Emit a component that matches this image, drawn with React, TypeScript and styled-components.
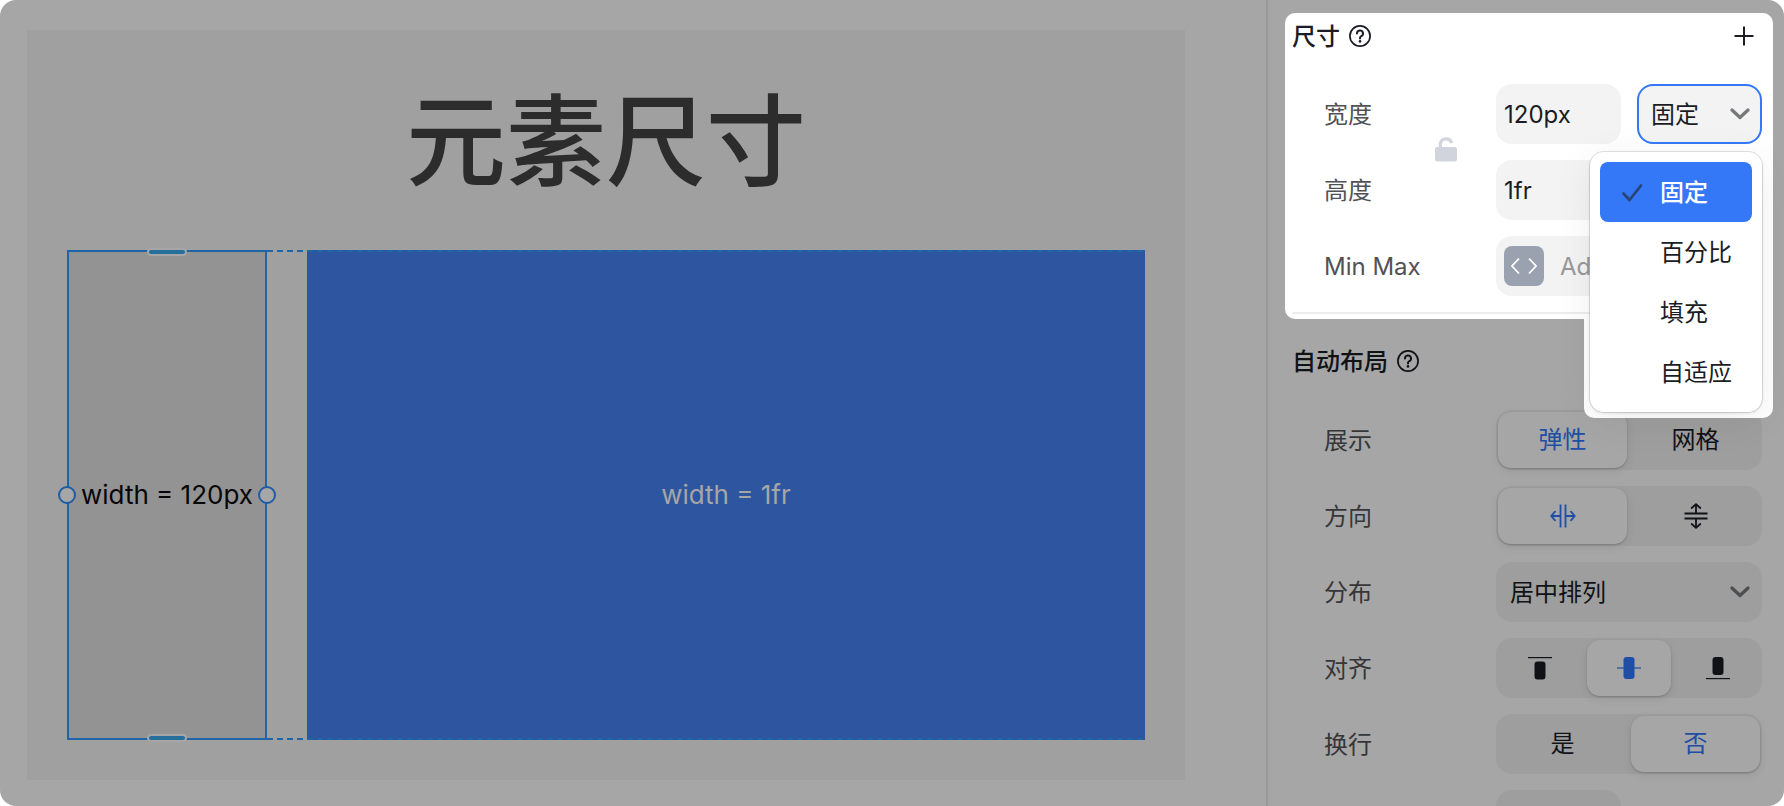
import React from 'react';
import styled, { createGlobalStyle, css } from 'styled-components';

const GlobalStyle = createGlobalStyle`
  * { box-sizing: border-box; }
  body {
    margin: 0;
    background: #ffffff;
    font-family: Inter, "Noto Sans CJK SC", sans-serif;
    font-size: 24px;
    line-height: 36px;
  }
  button, input, select { font: inherit; color: inherit; margin: 0; border: 0; background: none; }
  h1, h2 { margin: 0; }
`;

const Window = styled.div`
  display: flex;
  height: 100vh;
  overflow: hidden;
  border-radius: 16px;
  background: #a6a6a6;
`;

/* ---------- canvas ---------- */

const CanvasArea = styled.main`
  flex: 1;
  min-width: 0;
  display: flex;
  padding: 30px 81px 26px 27px;
`;

const Artboard = styled.section`
  flex: 1;
  display: flex;
  flex-direction: column;
  padding: 40px;
  background: #a0a0a0;
`;

const Title = styled.h1`
  padding-top: 2px;
  margin-bottom: 38px;
  font-size: 100px;
  line-height: 140px;
  font-weight: 500;
  text-align: center;
  color: #2c2c2c;
`;

const Boxes = styled.div`
  position: relative;
  flex: 1;
  display: flex;
  gap: 40px;
  font-size: 26px;
`;

const FixedBox = styled.div`
  position: relative;
  width: 200px;
  display: flex;
  align-items: center;
  justify-content: center;
  border: 2px solid #1e66a9;
  background: #939393;
  color: #060606;
  white-space: nowrap;
`;

const FluidBox = styled.div`
  flex: 1;
  display: flex;
  align-items: center;
  justify-content: center;
  background: #2e56a0;
  color: #a6a6a6;
`;

const Guide = styled.div<{ $edge: 'top' | 'bottom' }>`
  position: absolute;
  ${(p) => p.$edge}: 0;
  left: 200px;
  right: 0;
  height: 2px;
  background: repeating-linear-gradient(90deg, #1f66a6 0 6px, transparent 6px 10px);
`;

const Grip = styled.span<{ $edge: 'top' | 'bottom' }>`
  position: absolute;
  ${(p) => p.$edge}: -4px;
  left: calc(50% - 20px);
  width: 40px;
  height: 8px;
  border: 2px solid #a6a6a6;
  border-radius: 4px;
  background: #256f9d;
`;

const Knob = styled.span<{ $side: 'left' | 'right' }>`
  position: absolute;
  ${(p) => p.$side}: -11px;
  top: calc(50% - 9px);
  width: 18px;
  height: 18px;
  border: 2px solid #1f5ca6;
  border-radius: 50%;
  background: #a6a6a6;
`;

/* ---------- property panel ---------- */

const Panel = styled.aside`
  width: 518px;
  flex: none;
  padding: 13px 11px 0 17px;
  border-left: 2px solid #999999;
`;

const sectionBase = css`
  position: relative;
  padding-right: 11px;
`;

const SizeSection = styled.section`
  ${sectionBase}
  z-index: 1;
  height: 306px;
  border-radius: 10px 10px 0 10px;
  background: #ffffff;
  color: #1b1c24;

  &::after {
    content: "";
    position: absolute;
    top: 100%;
    right: 0;
    width: 189px;
    height: 99px;
    border-radius: 0 0 10px 10px;
    background: #ffffff;
  }
`;

const LayoutSection = styled.section`
  ${sectionBase}
  padding-top: 19px;
  color: #111216;
`;

const SectionHeader = styled.header<{ $space: number }>`
  display: flex;
  align-items: center;
  gap: 9px;
  height: 46px;
  margin-bottom: ${(p) => p.$space}px;
  padding: 0 8px 0 7px;
`;

const SectionTitle = styled.h2`
  padding-top: 2px;
  font-size: 24px;
  line-height: 36px;
  font-weight: 500;
`;

const IconButton = styled.button<{ $end?: boolean }>`
  display: flex;
  padding: 0;
  ${(p) => p.$end && 'margin-left: auto;'}
`;

const Fields = styled.div`
  display: grid;
  grid-template-columns: 111px 61px minmax(0, 1fr);
  grid-auto-rows: 60px;
  row-gap: 16px;
  align-items: center;
  padding-left: 39px;
`;

const Label = styled.label<{ $dim?: boolean }>`
  grid-column: 1;
  padding-top: 2px;
  white-space: nowrap;
  color: ${(p) => (p.$dim ? '#363638' : '#515256')};
`;

const LockButton = styled.button`
  grid-column: 2;
  grid-row: 1 / span 2;
  justify-self: start;
  display: flex;
  padding: 0 0 6px;
`;

const Control = styled.div`
  position: relative;
  grid-column: 3;
  display: grid;
  grid-template-columns: 1fr 1fr;
  gap: 16px;
`;

const TextBox = styled.input`
  min-width: 0;
  width: 100%;
  height: 60px;
  padding: 0 8px;
  border-radius: 16px;
  background: #f3f3f3;
`;

const BlankBox = styled(TextBox)`
  background: #9e9e9e;
`;

const CodeBox = styled.div`
  grid-column: 1 / -1;
  display: flex;
  align-items: center;
  height: 60px;
  padding-left: 8px;
  border-radius: 16px;
  background: #f3f3f3;

  ${TextBox} { padding: 0 16px; background: none; }
  ${TextBox}::placeholder { color: #97989c; opacity: 1; }
`;

const CodeButton = styled.button`
  flex: none;
  display: flex;
  padding: 0;
  border-radius: 8px;
  background: #9aa1af;
`;

const SelectWrap = styled.div<{ $wide?: boolean }>`
  position: relative;
  display: flex;
  ${(p) => p.$wide && 'grid-column: 1 / -1;'}

  svg {
    position: absolute;
    right: 12px;
    top: 24px;
    pointer-events: none;
  }
`;

const Select = styled.select<{ $active?: boolean }>`
  appearance: none;
  width: 100%;
  height: 60px;
  padding: 2px 14px 0;
  border-radius: 16px;
  background: ${(p) => (p.$active ? '#f3f3f3' : '#9e9e9e')};
  ${(p) => p.$active && 'border: 2px solid #3478f9; padding: 2px 12px 0;'}
`;

const Divider = styled.hr`
  height: 2px;
  margin: 16px 0 0 7px;
  border: 0;
  background: #ececec;
`;

const Menu = styled.div`
  position: absolute;
  z-index: 2;
  top: 68px;
  right: 0;
  width: 172px;
  padding: 10px;
  border-radius: 14px;
  background: #ffffff;
  box-shadow: 0 0 0 1px rgba(0, 0, 0, 0.1), 0 1px 3px rgba(0, 0, 0, 0.12), 0 8px 40px rgba(0, 0, 0, 0.07);
`;

const MenuItem = styled.button<{ $selected?: boolean }>`
  display: flex;
  align-items: center;
  width: 100%;
  height: 60px;
  padding: 2px 0 0 20px;
  border-radius: 8px;
  ${(p) => p.$selected && 'background: #3478f7; color: #ffffff; font-weight: 500;'}
`;

const CheckSlot = styled.span`
  display: flex;
  width: 40px;
`;

const Segments = styled.div`
  grid-column: 3;
  display: flex;
  gap: 4px;
  height: 60px;
  padding: 2px;
  border-radius: 16px;
  background: #9e9e9e;
`;

const Segment = styled.button<{ $on?: boolean }>`
  flex: 1 1 0;
  display: flex;
  align-items: center;
  justify-content: center;
  padding: 0;
  border-radius: 13px;
  ${(p) =>
    p.$on &&
    'background: #a6a6a6; color: #204da5; box-shadow: 0 1px 2px rgba(0, 0, 0, 0.18), 0 3px 10px rgba(0, 0, 0, 0.08);'}
`;

/* ---------- icons ---------- */

const HelpIcon = () => (
  <svg width="22" height="22" viewBox="0 0 22 22" fill="none" stroke="currentColor" strokeWidth="1.7" aria-hidden>
    <circle cx="11" cy="11" r="10.1" />
    <path d="M8 8.5a3 3 0 1 1 4.3 2.7c-.9.45-1.3.9-1.3 1.9v.3" strokeWidth="2" strokeLinecap="round" />
    <circle cx="11" cy="16.4" r="1.3" fill="currentColor" stroke="none" />
  </svg>
);

const PlusIcon = () => (
  <svg width="20" height="20" viewBox="0 0 20 20" fill="none" stroke="currentColor" strokeWidth="2" aria-hidden>
    <path d="M10 .5v19M.5 10h19" />
  </svg>
);

const LockIcon = () => (
  <svg width="22" height="26" viewBox="0 0 22 26" aria-hidden>
    <rect y="11" width="22" height="14.5" rx="2.2" fill="#d1d4dd" />
    <path d="M5.3 12V8a5.8 5.8 0 0 1 11.3-1.1" fill="none" stroke="#d1d4dd" strokeWidth="3.2" />
  </svg>
);

const CodeIcon = () => (
  <svg width="40" height="40" viewBox="0 0 40 40" fill="none" stroke="#ffffff" strokeWidth="1.8" aria-hidden>
    <path d="M15 12.5 8 20l7 7.5M25 12.5 32 20l-7 7.5" />
  </svg>
);

const ChevronIcon = ({ color }: { color: string }) => (
  <svg width="20" height="12" viewBox="0 0 20 12" fill="none" stroke={color} strokeWidth="3.2" aria-hidden>
    <path d="M2 2l8 7.5L18 2" strokeLinecap="round" strokeLinejoin="round" />
  </svg>
);

const CheckIcon = () => (
  <svg width="24" height="20" viewBox="0 0 24 20" fill="none" stroke="#2a4478" strokeWidth="2.8" aria-hidden>
    <path d="M3.5 10.500l6 6.500L21 2.500" strokeLinecap="round" strokeLinejoin="round" />
  </svg>
);

const RowIcon = () => (
  <svg width="26" height="24" viewBox="0 0 26 24" fill="none" stroke="currentColor" strokeWidth="1.8" aria-hidden>
    <path d="M10.5 .5v23M15.5 .5v23M10 12H1.5M16 12h8.5" />
    <path d="M5 7.7 1.2 12 5 16.3M21 7.7l3.8 4.3-3.8 4.3" strokeLinecap="round" strokeLinejoin="round" />
  </svg>
);

const ColumnIcon = () => (
  <svg width="24" height="26" viewBox="0 0 24 26" fill="none" stroke="currentColor" strokeWidth="1.8" aria-hidden>
    <path d="M.5 10.5h23M.5 15.5h23M12 10V1.5M12 16v8.5" />
    <path d="M7.7 5 12 1.2 16.3 5M7.7 21l4.3 3.8 4.3-3.8" strokeLinecap="round" strokeLinejoin="round" />
  </svg>
);

const AlignTopIcon = () => (
  <svg width="26" height="24" viewBox="0 0 26 24" fill="currentColor" aria-hidden>
    <rect x="1" y="1" width="24" height="1.2" />
    <rect x="7.5" y="5.5" width="11" height="18" rx="3" />
  </svg>
);

const AlignMiddleIcon = () => (
  <svg width="26" height="24" viewBox="0 0 26 24" fill="currentColor" aria-hidden>
    <rect x="1" y="11" width="24" height="2" opacity="0.6" />
    <rect x="7.5" y="1" width="11" height="22" rx="3" />
  </svg>
);

const AlignBottomIcon = () => (
  <svg width="26" height="24" viewBox="0 0 26 24" fill="currentColor" aria-hidden>
    <rect x="7.5" y="1" width="11" height="18" rx="3" />
    <rect x="1" y="22" width="24" height="1.2" />
  </svg>
);

const sizeModes = ['固定', '百分比', '填充', '自适应'];

export default function App() {
  return (
    <>
      <GlobalStyle />
      <Window>
        <CanvasArea>
          <Artboard>
            <Title>元素尺寸</Title>
            <Boxes>
              <FixedBox>
                width = 120px
                <Grip $edge="top" />
                <Grip $edge="bottom" />
                <Knob $side="left" />
                <Knob $side="right" />
              </FixedBox>
              <FluidBox>width = 1fr</FluidBox>
              <Guide $edge="top" />
              <Guide $edge="bottom" />
            </Boxes>
          </Artboard>
        </CanvasArea>

        <Panel>
          <SizeSection>
            <SectionHeader $space={25}>
              <SectionTitle>尺寸</SectionTitle>
              <IconButton aria-label="尺寸说明"><HelpIcon /></IconButton>
              <IconButton $end aria-label="添加"><PlusIcon /></IconButton>
            </SectionHeader>
            <Fields>
              <Label htmlFor="width">宽度</Label>
              <LockButton aria-label="锁定比例"><LockIcon /></LockButton>
              <Control>
                <TextBox id="width" defaultValue="120px" />
                <SelectWrap>
                  <Select $active aria-label="宽度模式" defaultValue="固定">
                    {sizeModes.map((m) => <option key={m}>{m}</option>)}
                  </Select>
                  <ChevronIcon color="#77787b" />
                </SelectWrap>
                <Menu role="listbox" aria-label="宽度模式">
                  {sizeModes.map((m, i) => (
                    <MenuItem key={m} role="option" aria-selected={i === 0} $selected={i === 0}>
                      <CheckSlot>{i === 0 && <CheckIcon />}</CheckSlot>
                      {m}
                    </MenuItem>
                  ))}
                </Menu>
              </Control>
              <Label htmlFor="height">高度</Label>
              <Control>
                <TextBox id="height" defaultValue="1fr" />
              </Control>
              <Label htmlFor="minmax">Min Max</Label>
              <Control>
                <CodeBox>
                  <CodeButton aria-label="表达式"><CodeIcon /></CodeButton>
                  <TextBox id="minmax" placeholder="Add" />
                </CodeBox>
              </Control>
            </Fields>
            <Divider />
          </SizeSection>

          <LayoutSection>
            <SectionHeader $space={26}>
              <SectionTitle>自动布局</SectionTitle>
              <IconButton aria-label="自动布局说明"><HelpIcon /></IconButton>
            </SectionHeader>
            <Fields>
              <Label $dim as="span">展示</Label>
              <Segments role="group" aria-label="展示">
                <Segment $on>弹性</Segment>
                <Segment>网格</Segment>
              </Segments>
              <Label $dim as="span">方向</Label>
              <Segments role="group" aria-label="方向">
                <Segment $on aria-label="水平"><RowIcon /></Segment>
                <Segment aria-label="垂直"><ColumnIcon /></Segment>
              </Segments>
              <Label $dim htmlFor="distribute">分布</Label>
              <Control>
                <SelectWrap $wide>
                  <Select id="distribute" defaultValue="居中排列">
                    <option>居中排列</option>
                  </Select>
                  <ChevronIcon color="#4d4e50" />
                </SelectWrap>
              </Control>
              <Label $dim as="span">对齐</Label>
              <Segments role="group" aria-label="对齐">
                <Segment aria-label="顶部"><AlignTopIcon /></Segment>
                <Segment $on aria-label="居中"><AlignMiddleIcon /></Segment>
                <Segment aria-label="底部"><AlignBottomIcon /></Segment>
              </Segments>
              <Label $dim as="span">换行</Label>
              <Segments role="group" aria-label="换行">
                <Segment>是</Segment>
                <Segment $on>否</Segment>
              </Segments>
              <Control>
                <BlankBox aria-label="间距" />
              </Control>
            </Fields>
          </LayoutSection>
        </Panel>
      </Window>
    </>
  );
}
